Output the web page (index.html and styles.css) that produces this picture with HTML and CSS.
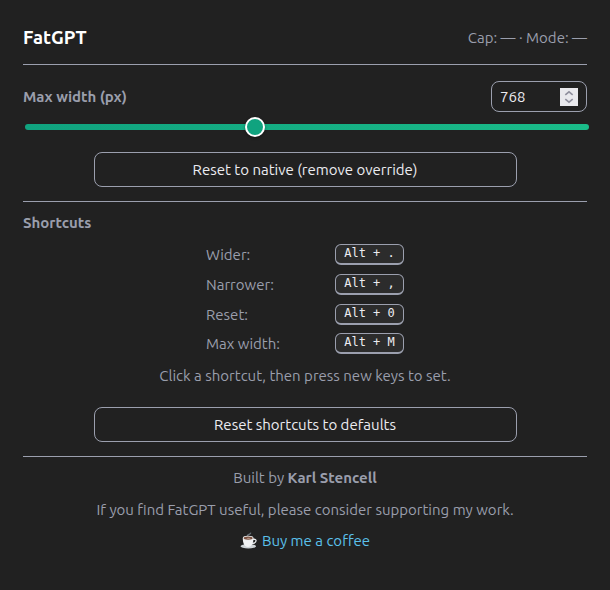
FILE: index.html
```html
<!DOCTYPE html>
<html lang="en">
<head>
<meta charset="utf-8">
<title>FatGPT</title>
<link rel="stylesheet" href="styles.css">
</head>
<body>
<main class="popup">
  <header class="header">
    <h1 class="title">FatGPT</h1>
    <div class="status">Cap: — · Mode: —</div>
  </header>
  <section class="width">
    <div class="width-row">
      <span class="label">Max width (px)</span>
      <div class="number">
        <span class="value">768</span>
        <svg class="spinner" viewBox="0 0 18 18" width="18" height="18"><path d="M5.300 6.800 9 3.800l3.700 3M5.300 11.200 9 14.200l3.700-3"/></svg>
      </div>
    </div>
    <div class="slider"><div class="thumb"></div></div>
    <button class="button">Reset to native (remove override)</button>
  </section>
  <section class="shortcuts">
    <h2 class="label">Shortcuts</h2>
    <div class="keys">
      <div class="key-row"><span>Wider:</span><kbd>Alt + .</kbd></div>
      <div class="key-row"><span>Narrower:</span><kbd>Alt + ,</kbd></div>
      <div class="key-row"><span>Reset:</span><kbd>Alt + 0</kbd></div>
      <div class="key-row"><span>Max width:</span><kbd>Alt + M</kbd></div>
    </div>
    <p class="hint">Click a shortcut, then press new keys to set.</p>
    <button class="button">Reset shortcuts to defaults</button>
  </section>
  <footer class="footer">
    <p>Built by <strong>Karl Stencell</strong></p>
    <p>If you find FatGPT useful, please consider supporting my work.</p>
    <a class="coffee"><svg class="cup" viewBox="0 0 17 17" width="17" height="17">
      <path d="M8 4C5.500 3 11.500 2.500 10.500.6" fill="none" stroke="#667078" stroke-width="1.300"/>
      <ellipse cx="8.300" cy="14.300" rx="7.800" ry="2.200" fill="#cfd4d7"/>
      <path d="M13 7.500c4-1.300 4.500 3.500-1 4" fill="none" stroke="#eceff1" stroke-width="1.300"/>
      <path d="M2.800 6c0 5 1.500 9 5.200 9s5.500-4 5.500-9z" fill="#f2f3f4"/>
      <ellipse cx="8.150" cy="6" rx="5.350" ry="2.300" fill="#e8e8e8"/>
      <ellipse cx="8.150" cy="6.100" rx="4.500" ry="1.700" fill="#79503f"/>
      <ellipse cx="8.500" cy="6.300" rx="2" ry=".6" fill="#b39182"/>
    </svg><span>Buy me a coffee</span></a>
  </footer>
</main>
</body>
</html>
```
FILE: styles.css
```css
* { box-sizing: border-box; }
body {
  margin: 0;
  background: #212121;
  color: #9a9eac;
  font: 15px/22px Ubuntu, "Noto Sans", sans-serif;
}
h1, h2, p { margin: 0; }
.popup { height: 590px; padding: 0 23px; white-space: nowrap; }
.header {
  height: 65px;
  padding-top: 11px;
  display: flex;
  justify-content: space-between;
  align-items: center;
  border-bottom: 1px solid #9b9fae;
}
.title { margin-bottom: 1px; color: #fff; font-size: 18.5px; font-weight: 700; }
.width { height: 137px; padding-top: 16px; border-bottom: 1px solid #9b9fae; }
.width-row { height: 31px; display: flex; align-items: center; justify-content: space-between; }
.label { font-size: 15px; font-weight: 600; }
.number {
  width: 96px;
  height: 31px;
  padding: 0 8px;
  border: 1px solid #9b9fae;
  border-radius: 8px;
  color: #ececf1;
  display: flex;
  align-items: center;
  justify-content: space-between;
}
.spinner { background: #e9e9ed; fill: none; stroke: #8f8f9d; stroke-width: 1.6; }
.slider {
  width: 564px;
  height: 6px;
  margin: 12px 0 22px 2px;
  border-radius: 3px;
  background: linear-gradient(90deg, #10a37f, #1abc89);
  display: flex;
  align-items: center;
}
.thumb {
  width: 20px;
  height: 20px;
  margin-left: 220px;
  border: 2px solid #fff;
  border-radius: 50%;
  background: #10a37f;
  box-shadow: 0 1px 3px rgba(0, 0, 0, .4);
}
.button {
  display: block;
  width: 423px;
  height: 35px;
  margin: 0 auto;
  padding: 0;
  border: 1px solid #9b9fae;
  border-radius: 8px;
  background: transparent;
  color: #ececf1;
  font: inherit;
}
.shortcuts { height: 255px; padding-top: 10px; border-bottom: 1px solid #9b9fae; }
.keys { width: 198px; margin: 10px auto 0; display: grid; grid-template-rows: 22px 22px 21px 21px; row-gap: 8px; }
.key-row { height: 21px; display: flex; align-items: center; justify-content: space-between; }
kbd {
  width: 69px;
  height: 21px;
  border: 1px solid #9b9fae;
  border-bottom-width: 2px;
  border-radius: 6px;
  background: #2c2c2c;
  color: #ececf1;
  font: 12px/17px "DejaVu Sans Mono", monospace;
  text-align: center;
}
.hint { margin: 11px 0 20px; text-align: center; }
.footer { padding-top: 10px; display: flex; flex-direction: column; align-items: center; gap: 10px; }
.footer strong { font-weight: 600; }
.coffee { margin-top: -1px; color: #5bc0eb; display: flex; align-items: center; gap: 5px; }
.cup { margin-bottom: 1px; }
```
